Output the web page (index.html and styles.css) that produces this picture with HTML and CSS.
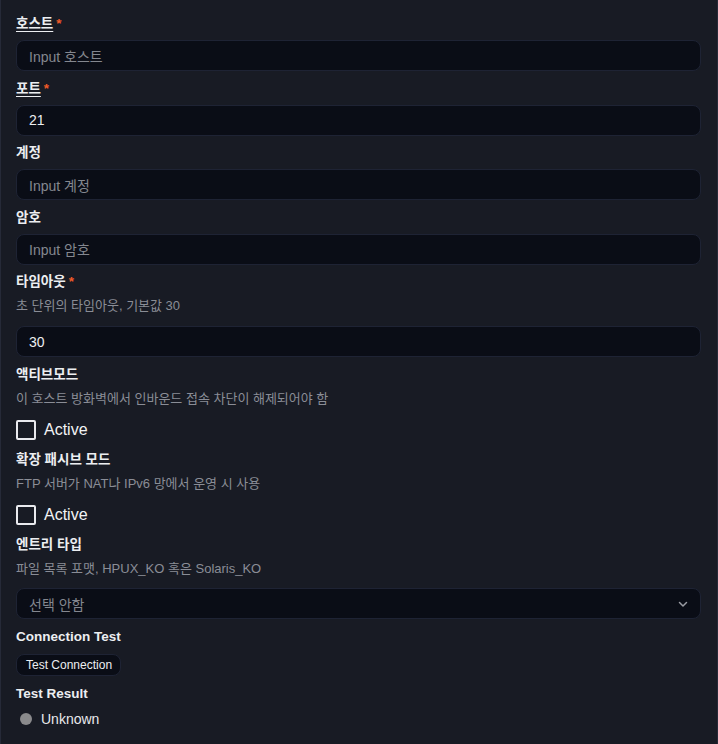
FILE: index.html
```html
<!DOCTYPE html>
<html lang="ko">
<head>
<meta charset="utf-8">
<title>FTP</title>
<link rel="stylesheet" href="styles.css">
</head>
<body>
<div class="panel">
  <form class="form">
    <div class="field">
      <label class="label"><span class="tip">호스트</span><span class="req">*</span></label>
      <div class="input placeholder">Input 호스트</div>
    </div>
    <div class="field">
      <label class="label"><span class="tip">포트</span><span class="req">*</span></label>
      <div class="input">21</div>
    </div>
    <div class="field">
      <label class="label">계정</label>
      <div class="input placeholder">Input 계정</div>
    </div>
    <div class="field">
      <label class="label">암호</label>
      <div class="input placeholder">Input 암호</div>
    </div>
    <div class="field">
      <label class="label">타임아웃<span class="req">*</span></label>
      <div class="hint">초 단위의 타임아웃, 기본값 30</div>
      <div class="input after-hint">30</div>
    </div>
    <div class="field">
      <label class="label">액티브모드</label>
      <div class="hint">이 호스트 방화벽에서 인바운드 접속 차단이 해제되어야 함</div>
      <div class="check"><span class="box"></span><span class="check-text">Active</span></div>
    </div>
    <div class="field">
      <label class="label">확장 패시브 모드</label>
      <div class="hint">FTP 서버가 NAT나 IPv6 망에서 운영 시 사용</div>
      <div class="check"><span class="box"></span><span class="check-text">Active</span></div>
    </div>
    <div class="field">
      <label class="label">엔트리 타입</label>
      <div class="hint">파일 목록 포맷, HPUX_KO 혹은 Solaris_KO</div>
      <div class="input select after-hint-select placeholder">
        <span>선택 안함</span>
        <svg class="chev" width="12" height="12" viewBox="0 0 12 12"><path d="M2.5 4.5 6 8l3.5-3.5" fill="none" stroke="currentColor" stroke-width="1.5" stroke-linecap="round" stroke-linejoin="round"/></svg>
      </div>
    </div>
    <div class="field field-conn">
      <label class="label">Connection Test</label>
      <div class="btn-row"><button type="button" class="btn">Test Connection</button></div>
    </div>
    <div class="field field-last">
      <label class="label">Test Result</label>
      <div class="status"><span class="dot"></span><span>Unknown</span></div>
    </div>
  </form>
</div>
</body>
</html>
```

FILE: styles.css
```css
html, body {
  margin: 0;
  padding: 0;
  background: #181b24;
}
body {
  font-family: "Liberation Sans", "Noto Sans CJK KR", sans-serif;
  color: #e8e9ec;
}
.panel {
  min-height: 744px;
  box-sizing: border-box;
  border-left: 1px solid #262a38;
  border-right: 1px solid #262a38;
  padding: 14px 16px 0 15px;
}
.form {
  display: flex;
  flex-direction: column;
  gap: 7.5px;
}
.field {
  display: flex;
  flex-direction: column;
}
.label {
  font-size: 13.5px;
  font-weight: bold;
  line-height: 20px;
  height: 20px;
  color: #eceef1;
}
.tip {
  text-decoration: underline;
  text-underline-offset: 3px;
}
.req {
  color: #f05a28;
  margin-left: 3px;
}
.hint {
  margin-top: 5px;
  font-size: 13px;
  line-height: 17px;
  color: #8a8d96;
}
.input {
  margin-top: 6px;
  height: 31px;
  box-sizing: border-box;
  background: #0a0d16;
  border: 1px solid #1e2334;
  border-radius: 8px;
  padding: 0 12px;
  display: flex;
  align-items: center;
  font-size: 14px;
  color: #eceef1;
}
.input.after-hint {
  margin-top: 12px;
}
.input.after-hint-select {
  margin-top: 11.5px;
}
.placeholder {
  color: #84878f;
}
.select {
  justify-content: space-between;
  padding-right: 11px;
}
.chev {
  color: #9a9ca3;
}
.check {
  margin-top: 11.5px;
  height: 24px;
  display: flex;
  align-items: center;
  gap: 8px;
}
.box {
  width: 20px;
  height: 20px;
  box-sizing: border-box;
  border: 2px solid #e9eaee;
  border-radius: 2px;
}
.check-text {
  font-size: 16px;
  color: #f2f3f5;
}
.field-conn {
  margin-top: 0.5px;
}
.btn-row {
  margin-top: 7px;
  display: flex;
}
.btn {
  height: 22px;
  box-sizing: border-box;
  padding: 0 8px 0 9px;
  background: #0a0d16;
  border: 1px solid #1e2334;
  border-radius: 8px;
  font-family: "Liberation Sans", "Noto Sans CJK KR", sans-serif;
  font-size: 12px;
  color: #eceef1;
  cursor: pointer;
}
.field-last {
  margin-top: 0.5px;
}
.status {
  margin-top: 4.5px;
  height: 20px;
  display: flex;
  align-items: center;
  gap: 9px;
  padding-left: 4px;
  font-size: 14px;
  color: #e8e9ec;
}
.dot {
  width: 12px;
  height: 12px;
  border-radius: 50%;
  background: #8a8a8c;
}
```
